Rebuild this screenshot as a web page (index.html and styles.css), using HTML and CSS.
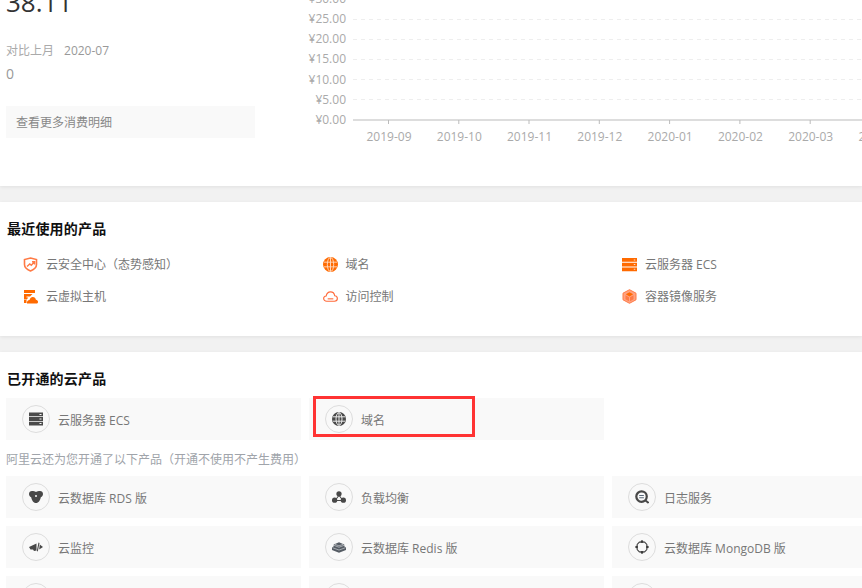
FILE: index.html
```html
<!DOCTYPE html>
<html lang="zh-CN">
<head>
<meta charset="utf-8">
<title>概览</title>
<link rel="stylesheet" href="styles.css">
</head>
<body>
<main class="page">
  <section class="card overview">
    <div class="summary">
      <div class="amount">38.11</div>
      <div class="compare"><span class="compare-label">对比上月</span><span>2020-07</span></div>
      <div class="delta">0</div>
      <a class="more">查看更多消费明细</a>
    </div>
    <svg class="chart" viewBox="300 -20 562 206" width="562" height="206">
      <g class="grid">
        <line x1="353" x2="862" y1="-0.5" y2="-0.5"/>
        <line x1="353" x2="862" y1="19.5" y2="19.5"/>
        <line x1="353" x2="862" y1="39.5" y2="39.5"/>
        <line x1="353" x2="862" y1="59.5" y2="59.5"/>
        <line x1="353" x2="862" y1="79.5" y2="79.5"/>
        <line x1="353" x2="862" y1="99.5" y2="99.5"/>
      </g>
      <g class="axis">
        <line x1="353" x2="862" y1="120" y2="120"/>
        <line x1="388.500" x2="388.500" y1="120" y2="124"/>
        <line x1="458.800" x2="458.800" y1="120" y2="124"/>
        <line x1="529" x2="529" y1="120" y2="124"/>
        <line x1="599.300" x2="599.300" y1="120" y2="124"/>
        <line x1="669.600" x2="669.600" y1="120" y2="124"/>
        <line x1="739.900" x2="739.900" y1="120" y2="124"/>
        <line x1="810.200" x2="810.200" y1="120" y2="124"/>
      </g>
      <g class="ylabels">
        <text x="346" y="3">¥30.00</text>
        <text x="346" y="23">¥25.00</text>
        <text x="346" y="43">¥20.00</text>
        <text x="346" y="63">¥15.00</text>
        <text x="346" y="84">¥10.00</text>
        <text x="346" y="104">¥5.00</text>
        <text x="346" y="124">¥0.00</text>
      </g>
      <g class="xlabels">
        <text x="389" y="140.500">2019-09</text>
        <text x="459.300" y="140.500">2019-10</text>
        <text x="529.500" y="140.500">2019-11</text>
        <text x="599.800" y="140.500">2019-12</text>
        <text x="670.100" y="140.500">2020-01</text>
        <text x="740.400" y="140.500">2020-02</text>
        <text x="810.700" y="140.500">2020-03</text>
        <text x="881" y="140.500">2020-04</text>
      </g>
    </svg>
  </section>

  <section class="card recent">
    <h2 class="title">最近使用的产品</h2>
    <div class="recent-grid">
      <a class="recent-item">
        <svg class="ricon" viewBox="0 0 15 15"><path d="M7.500 1 13.500 2.600V7.500c0 3-2.500 5-6 6.500C4 12.500 1.500 10.500 1.500 7.500V2.600Z" fill="none" stroke="#ff7a45" stroke-width="1.600"/><path d="M4 9.500 6.800 7l1.500 1.300 3-3.300M9 4.800h2.600v2.600" fill="none" stroke="#ff7a45" stroke-width="1.400"/></svg>
        <span>云安全中心（态势感知）</span>
      </a>
      <a class="recent-item">
        <svg class="ricon" viewBox="0 0 16 16"><circle cx="8" cy="8" r="8" fill="#ff6a00"/><g fill="none" stroke="#ffd9bf" stroke-width="1"><ellipse cx="8" cy="8" rx="3.400" ry="7.500"/><path d="M8 .5v15M1 5.500h14M1 10.500h14"/></g></svg>
        <span>域名</span>
      </a>
      <a class="recent-item">
        <svg class="ricon" viewBox="0 0 15 15"><path fill="#ff6a00" d="M0 1h15v3.800H0zM0 5.700h15v3.800H0zM0 10.400h15v3.800H0z"/><path fill="#ffd9bf" d="M11.800 2.400h1.500v1h-1.500zM11.800 7.100h1.500v1h-1.500zM11.800 11.800h1.500v1h-1.500z"/></svg>
        <span>云服务器 ECS</span>
      </a>
      <a class="recent-item">
        <svg class="ricon" viewBox="0 0 15 15"><path fill="#ff6a00" d="M1 1h11v3H1zM1 5h8.500L7 7.500H3.500v1H5.300L3.800 10.500H1zM1 11h2.500v3H1z"/><path fill="#ff6a00" d="M4 14.500c-.5-2.200 1-3.500 2.500-3.500C7 9 8.300 8 9.800 8c1.700 0 2.900 1.200 3.100 2.700 1.200.1 2.100 1 2.100 2.100 0 1-.4 1.700-1 1.700Z"/></svg>
        <span>云虚拟主机</span>
      </a>
      <a class="recent-item">
        <svg class="ricon" viewBox="0 0 16 15"><path fill="none" stroke="#ff6a3a" stroke-width="1.200" d="M4 12.500C2 12.500.7 11.300.7 9.700.7 8.200 1.900 7 3.400 6.900 3.900 4.300 5.800 2.500 8 2.500c2.300 0 4.100 1.700 4.500 4.200 1.600.1 2.800 1.400 2.800 2.900 0 1.600-1.300 2.900-3.100 2.900Z"/><path stroke="#ff6a3a" stroke-width="1.200" d="M5 10h6"/></svg>
        <span>访问控制</span>
      </a>
      <a class="recent-item">
        <svg class="ricon" viewBox="0 0 15 15"><path fill="#ffa280" stroke="#ff7a45" stroke-width="1" d="M7.500.7 14 4.200v6.600l-6.500 3.500L1 10.800V4.200Z"/><path fill="#ff6a00" d="M7.500 3.200 11.200 5.300 7.500 7.500 3.800 5.300Z"/><path fill="#ff7a45" d="M3.500 6.300 7 8.300v3.900L3.500 10.200ZM11.500 6.300 8 8.300v3.900l3.500-2Z"/></svg>
        <span>容器镜像服务</span>
      </a>
    </div>
  </section>

  <section class="card products">
    <h2 class="title">已开通的云产品</h2>
    <div class="tiles">
      <a class="tile">
        <span class="badge"><svg class="bicon" viewBox="0 0 14 14"><path fill="#4a4a4a" d="M0 .5h14v3.800H0zM0 5.100h14v3.800H0zM0 9.700h14v3.800H0z"/><path fill="#f9f9f9" d="M10.500 2h2v1h-2zM10.500 6.500h2v1h-2zM10.500 11.100h2v1h-2z"/></svg></span>
        <span class="label">云服务器 ECS</span>
      </a>
      <a class="tile">
        <span class="badge"><svg class="bicon" viewBox="0 0 14 14"><circle cx="7" cy="7" r="7" fill="#4a4a4a"/><g fill="none" stroke="#f9f9f9" stroke-width=".9"><ellipse cx="7" cy="7" rx="3" ry="6.300"/><path d="M7 .7v12.600M1 4.800h12M1 9.200h12"/></g></svg></span>
        <span class="label">域名</span>
        <span class="marker"></span>
      </a>
    </div>
    <p class="note">阿里云还为您开通了以下产品（开通不使用不产生费用）</p>
    <div class="tiles">
      <a class="tile">
        <span class="badge"><svg class="bicon" viewBox="0 0 14 14"><path fill="#484848" d="M3 1C4.500 1 5.800 1.200 7 2 8.200 1.200 9.500 1 11 1 12.800 1 14 2.300 14 4c0 1.500-.9 2.600-2.200 3.200C11.400 10 9.500 13 7 13S2.600 10 2.200 7.200C.9 6.600 0 5.500 0 4 0 2.300 1.200 1 3 1Z"/><circle cx="7" cy="6" r="1" fill="#f9f9f9"/></svg></span>
        <span class="label">云数据库 RDS 版</span>
      </a>
      <a class="tile">
        <span class="badge"><svg class="bicon" viewBox="0 0 16 14"><g fill="#484848"><circle cx="8" cy="3.300" r="3"/><circle cx="3" cy="10.700" r="3"/><circle cx="13" cy="10.700" r="3"/></g><path stroke="#484848" stroke-width="1.200" d="M8 5 4 10.500M8 5l4 5.500M4 11h8"/></svg></span>
        <span class="label">负载均衡</span>
      </a>
      <a class="tile">
        <span class="badge"><svg class="bicon" viewBox="0 0 15 15"><circle cx="7" cy="7" r="5.600" fill="none" stroke="#484848" stroke-width="2.400"/><path stroke="#5a6a7a" stroke-width="1.100" d="M4.500 5.800h5M4.500 8.200h5"/><path stroke="#484848" stroke-width="2" d="m10.500 10.800 4 3"/></svg></span>
        <span class="label">日志服务</span>
      </a>
      <a class="tile">
        <span class="badge"><svg class="bicon" viewBox="0 0 14 14"><path fill="#484848" d="M0 7 7.500 3.500V10.500L5 11 4 9.500H1.500Z"/><path fill="#484848" d="M9.500 2.500 10.500 3 8.800 11.500 7.800 11Z"/><path fill="#484848" d="M10.800 4.500 14 7l-3.800 2.500Z"/></svg></span>
        <span class="label">云监控</span>
      </a>
      <a class="tile">
        <span class="badge"><svg class="bicon" viewBox="0 0 16 14"><path fill="#555c64" d="M8 1.500 14 4v2l2 1.500v3L8 13.500 0 10.500v-3L2 6V4Z"/><path fill="none" stroke="#c8ccd0" stroke-width=".8" d="M2 5 8 7.300 14 5M.6 7.800 8 10.500l7.400-2.700M3 3.800 8 5.700l5-1.900"/></svg></span>
        <span class="label">云数据库 Redis 版</span>
      </a>
      <a class="tile">
        <span class="badge"><svg class="bicon" viewBox="0 0 16 16"><path fill="none" stroke="#484848" stroke-width="1.300" d="M5 2.500h6L13.500 5v6L11 13.500H5L2.500 11V5Z"/><g fill="#3a3a3a"><circle cx="8" cy="1.800" r="1.500"/><circle cx="8" cy="14.200" r="1.500"/><circle cx="1.800" cy="8" r="1.500"/><circle cx="14.200" cy="8" r="1.500"/></g></svg></span>
        <span class="label">云数据库 MongoDB 版</span>
      </a>
      <a class="tile"><span class="badge"></span></a>
      <a class="tile"><span class="badge"></span></a>
      <a class="tile"><span class="badge"></span></a>
    </div>
  </section>
</main>
</body>
</html>
```
FILE: styles.css
```css
* { box-sizing: border-box; }
html, body { margin: 0; height: 100%; overflow: hidden; }
body {
  width: 862px;
  height: 588px;
  background: #f2f2f2;
  font-family: "Open Sans", "Noto Sans CJK SC", sans-serif;
  font-size: 12px;
  color: #777;
}
.page { display: flex; flex-direction: column; gap: 16px; margin-top: -20px; }
.card { background: #fff; box-shadow: 0 1px 4px rgba(0, 0, 0, .08); }

.overview { display: flex; height: 206px; }
.summary { width: 300px; padding-left: 6px; flex: none; }
.amount { font-size: 26px; line-height: 32px; color: #333; padding-top: 6px; }
.compare { margin-top: 24px; line-height: 18px; color: #999; display: flex; gap: 10px; }
.compare-label { color: #aaa; }
.delta { margin-top: 5px; font-size: 14px; line-height: 18px; color: #999; }
.more {
  display: block;
  width: 249px;
  height: 32px;
  margin-top: 23px;
  padding: 1px 0 0 10px;
  line-height: 32px;
  background: #f9f9f9;
  color: #888;
}
.chart { flex: none; display: block; }
.chart text { font-size: 12px; fill: #aaa; font-family: "Open Sans", sans-serif; }
.grid line { stroke: #eee; stroke-dasharray: 4 4; }
.axis line { stroke: #bbb; }
.ylabels text { text-anchor: end; }
.xlabels text { text-anchor: middle; }

.title { margin: 0; font-size: 14px; line-height: 18px; font-weight: 700; color: #111; letter-spacing: .2px; }

.recent { height: 134px; padding: 18px 0 0 7px; }
.recent-grid { display: grid; grid-template-columns: 299.5px 299.5px 1fr; grid-auto-rows: 32px; margin-top: 10px; }
.recent-item { display: flex; align-items: center; padding-left: 16px; color: #777; }
.ricon { width: 15px; height: 15px; margin-right: 8px; flex: none; }

.products { padding: 18px 0 0 6px; height: 260px; }
.products .title { margin: 0 0 0 1px; }
.tiles { display: grid; grid-template-columns: repeat(3, 295px); grid-auto-rows: 42px; gap: 8px; margin-top: 10px; }
.tile { position: relative; display: flex; align-items: center; gap: 8px; padding-left: 16px; background: #f9f9f9; color: #777; white-space: nowrap; }
.badge { width: 28px; height: 28px; flex: none; display: flex; align-items: center; justify-content: center; border: 1px solid #ddd; border-radius: 50%; }
.bicon { width: 14px; height: 14px; }
.label { padding-top: 2px; }
.marker { position: absolute; left: 4px; top: -2px; width: 162px; height: 41px; border: 3px solid #ff3333; }
.note { margin: 10px 0 -3px; padding-top: 1px; line-height: 18px; color: #a0a4aa; }
```
